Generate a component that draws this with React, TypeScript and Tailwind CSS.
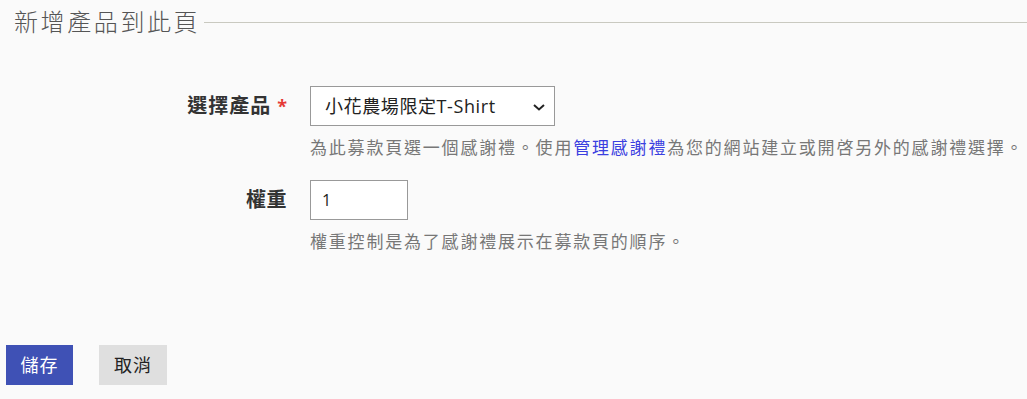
import React from "react";

export default function App() {
  const font = { fontFamily: '"Open Sans", "Noto Sans CJK TC", sans-serif' };
  return (
    <div className="w-[1027px] h-[399px] bg-[#fafafa] text-[#333] overflow-hidden" style={font}>
      <div className="flex items-center pl-[14px] h-[44px]">
        <span className="text-[24px] leading-[30px] text-[#555] font-light tracking-[2.6px]">新增產品到此頁</span>
        <div className="flex-1 ml-[4px] border-t border-[#c9c9c0] mt-[1px]" />
      </div>
      <div className="mt-[42px] grid grid-cols-[290px_1fr] gap-x-[20px]">
        <div className="flex justify-end items-center h-[40px] pr-[3px]">
          <span className="text-[20px] font-bold text-[#333] tracking-[1px]">選擇產品</span>
          <span className="text-[18px] font-bold text-[#e53935] ml-[6px]">*</span>
        </div>
        <div>
          <div className="w-[245px] h-[40px] border border-[#999] bg-white flex items-center justify-between pl-[14px] pr-[8px]">
            <span className="text-[18px] text-[#222] tracking-[0.6px]">小花農場限定T-Shirt</span>
            <svg width="14" height="10" viewBox="0 0 14 10" className="mt-[1px]">
              <path d="M2 3l5 4.5L12 3" fill="none" stroke="#222" strokeWidth="2" />
            </svg>
          </div>
          <div className="mt-[9px] text-[17px] leading-[26px] text-[#777] tracking-[1.8px] whitespace-nowrap">
            為此募款頁選一個感謝禮。使用<span className="text-[#3b3fe0]">管理感謝禮</span>為您的網站建立或開啓另外的感謝禮選擇。
          </div>
        </div>
        <div className="flex justify-end items-center h-[40px] pr-[3px] mt-[19px]">
          <span className="text-[20px] font-bold text-[#333] tracking-[0.5px]">權重</span>
        </div>
        <div className="mt-[19px]">
          <div className="w-[98px] h-[40px] border border-[#999] bg-white flex items-center pl-[11px]">
            <span className="text-[16px] text-[#222]">1</span>
          </div>
          <div className="mt-[9px] text-[17px] leading-[26px] text-[#777] tracking-[1.8px] whitespace-nowrap">
            權重控制是為了感謝禮展示在募款頁的順序。
          </div>
        </div>
      </div>
      <div className="flex gap-[26px] pl-[6px] mt-[90px]">
        <div className="w-[67px] h-[40px] bg-[#3f51b5] text-white text-[18px] flex items-center justify-center tracking-[1px]">儲存</div>
        <div className="w-[68px] h-[40px] bg-[#dfdfdf] text-[#222] text-[18px] flex items-center justify-center tracking-[1px]">取消</div>
      </div>
    </div>
  );
}
